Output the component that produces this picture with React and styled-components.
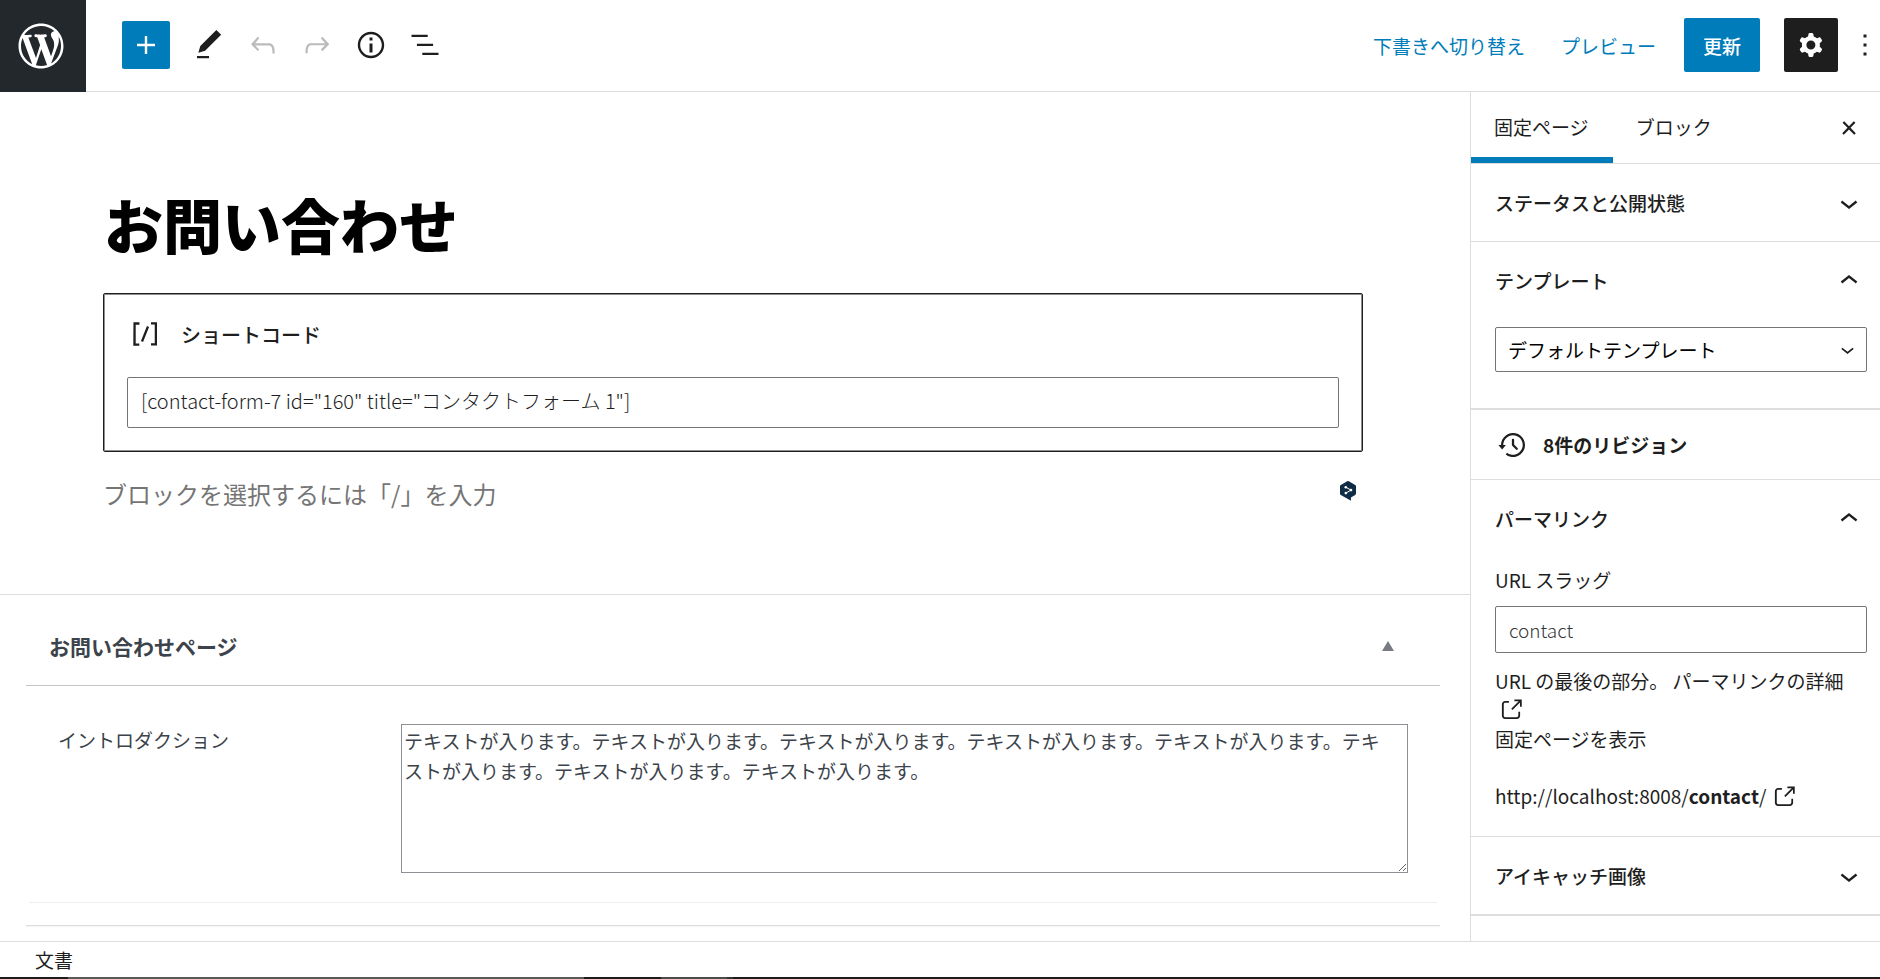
import React, { useState } from "react";
import styled, { createGlobalStyle } from "styled-components";

const color = {
  blue: "#007cba",
  ink: "#1e1e1e",
  line: "#dddddd",
  field: "#757575",
  meta: "#3c434a",
};

const GlobalStyle = createGlobalStyle`
  *, *::before, *::after { box-sizing: border-box; }
  body {
    margin: 0;
    background: #fff;
    color: ${color.ink};
    font-family: "Noto Sans CJK JP", "Noto Sans", sans-serif;
    font-size: 19px;
    line-height: 29px;
  }
  button, input, select, textarea { font: inherit; color: inherit; }
  button { cursor: pointer; }
`;

const paths = {
  plus: "M18 11.2h-5.2V6h-1.6v5.2H6v1.6h5.2V18h1.6v-5.2H18z",
  edit: "M20.1 5.1L16.9 2 6.2 12.7l-1.3 4.4 4.5-1.3L20.1 5.1zM4 20.8h8v-1.5H4v1.5z",
  undo: "M18.3 11.7c-.6-.6-1.4-.9-2.3-.9H6.7l2.9-3.3-1.1-1-4.5 5L8.5 16l1-1-2.7-2.7H16c.5 0 .9.2 1.3.5 1 1 1 3.4 1 4.5v.3h1.5v-.2c0-1.5 0-4.3-1.5-5.7z",
  redo: "M15.6 6.5l-1.1 1 2.9 3.3H8c-.9 0-1.7.3-2.3.9-1.4 1.5-1.4 4.2-1.4 5.6v.2h1.5v-.3c0-1.1 0-3.5 1-4.5.3-.3.7-.5 1.3-.5h9.2L14.5 15l1.1 1.1 4.6-4.6-4.6-5z",
  info: "M12 3.2c-4.8 0-8.8 3.9-8.8 8.8 0 4.8 3.9 8.8 8.8 8.8 4.8 0 8.8-3.9 8.8-8.8 0-4.8-4-8.8-8.8-8.8zm0 16c-4 0-7.2-3.3-7.2-7.2C4.8 8 8 4.8 12 4.8s7.2 3.3 7.2 7.2c0 4-3.2 7.2-7.2 7.2zM11 17h2v-6h-2v6zm0-8h2V7h-2v2z",
  list: "M13.8 5.2H3v1.5h10.8V5.2zm-3.6 12v1.5H21v-1.5H10.2zm7.2-6H6.6v1.5h10.8v-1.5z",
  cog: "M10.289 4.836A1 1 0 0111.275 4h1.306a1 1 0 01.987.836l.244 1.466c.787.26 1.503.679 2.108 1.218l1.393-.522a1 1 0 011.216.437l.653 1.13a1 1 0 01-.23 1.273l-1.148.944a6.025 6.025 0 010 2.435l1.149.946a1 1 0 01.23 1.272l-.653 1.13a1 1 0 01-1.216.437l-1.394-.522c-.605.54-1.32.958-2.108 1.218l-.244 1.466a1 1 0 01-.987.836h-1.306a1 1 0 01-.986-.836l-.244-1.466a5.995 5.995 0 01-2.108-1.218l-1.394.522a1 1 0 01-1.217-.436l-.653-1.131a1 1 0 01.23-1.272l1.149-.946a6.026 6.026 0 010-2.435l-1.148-.944a1 1 0 01-.23-1.272l.653-1.131a1 1 0 011.217-.437l1.393.522a5.994 5.994 0 012.108-1.218l.244-1.466zM14.929 12a3 3 0 11-6 0 3 3 0 016 0z",
  more: "M13 19h-2v-2h2v2zm0-6h-2v-2h2v2zm0-6h-2V5h2v2z",
  down: "M17.5 11.6L12 16l-5.5-4.4.9-1.2L12 14l4.5-3.6 1 1.2z",
  up: "M6.5 12.4L12 8l5.5 4.4-.9 1.2L12 10l-4.5 3.6-1-1.2z",
  close: "M13 11.9l3.3-3.4-1.1-1-3.2 3.3-3.2-3.3-1.1 1 3.3 3.4-3.5 3.6 1 1L12 13l3.5 3.5 1-1z",
  backup: "M5.5 12h1.75l-2.5 3-2.5-3H4a8 8 0 113.134 6.35l.907-1.194A6.5 6.5 0 105.5 12zm9.53 1.97l-2.28-2.28V8.5a.75.75 0 00-1.5 0V12a.747.747 0 00.218.529l1.282-.84-1.28.842 2.5 2.5a.75.75 0 101.06-1.061z",
  external: "M18.2 17c0 .7-.6 1.2-1.2 1.2H7c-.7 0-1.2-.6-1.2-1.2V7c0-.7.6-1.2 1.2-1.2h3.2V4.2H7C5.5 4.2 4.2 5.5 4.2 7v10c0 1.5 1.2 2.8 2.8 2.8h10c1.5 0 2.8-1.2 2.8-2.8v-3.6h-1.5V17zM14.9 3v1.5h3.7l-6.4 6.4 1.1 1.1 6.4-6.4v3.7h1.5V3h-6.3z",
  shortcode: "M16 4.2v1.5h2.5v12.5H16v1.5h4V4.2h-4zM4.2 19.8h4v-1.5H5.8V5.8h2.5V4.2h-4l-.1 15.6zm5.1-3.1l1.4.6 4-10-1.4-.6-4 10z",
  wordpress: "M20 10c0-5.51-4.49-10-10-10C4.48 0 0 4.49 0 10c0 5.52 4.48 10 10 10 5.51 0 10-4.48 10-10zM7.78 15.37L4.37 6.22c.55-.02 1.17-.08 1.17-.08.5-.06.44-1.13-.06-1.11 0 0-1.45.11-2.37.11-.18 0-.37 0-.58-.01C4.12 2.69 6.87 1.11 10 1.11c2.33 0 4.45.87 6.05 2.34-.68-.11-1.65.39-1.65 1.58 0 .74.45 1.36.9 2.1.35.61.55 1.36.55 2.46 0 1.49-1.4 5-1.4 5l-3.03-8.37c.54-.02.82-.17.82-.17.5-.05.44-1.25-.06-1.22 0 0-1.44.12-2.38.12-.87 0-2.33-.12-2.33-.12-.5-.03-.56 1.2-.06 1.22l.92.08 1.26 3.41zM17.41 10c.24-.64.74-1.87.43-4.25.7 1.29 1.05 2.71 1.05 4.25 0 3.29-1.73 6.24-4.4 7.78.97-2.59 1.94-5.2 2.92-7.78zM6.1 18.09C3.12 16.65 1.11 13.53 1.11 10c0-1.3.23-2.48.72-3.59C3.25 10.3 4.67 14.2 6.1 18.09zm4.03-6.63l2.58 6.98c-.86.29-1.76.45-2.71.45-.79 0-1.57-.11-2.29-.33.81-2.38 1.62-4.74 2.42-7.1z",
};

const Svg = styled.svg`
  display: block;
  flex: none;
  fill: currentColor;
`;

function Icon({ name, size = 36, viewBox = "0 0 24 24", className }) {
  return (
    <Svg className={className} width={size} height={size} viewBox={viewBox} aria-hidden="true">
      <path fillRule="evenodd" clipRule="evenodd" d={paths[name]} />
    </Svg>
  );
}

const Page = styled.div`
  display: flex;
  flex-direction: column;
  min-height: 100vh;
`;

const Header = styled.header`
  display: flex;
  align-items: stretch;
  height: 92px;
`;

const HomeLink = styled.a`
  display: flex;
  align-items: center;
  width: 86px;
  padding-left: 14px;
  background: #23282d;
  color: #fff;
`;

const HeaderBar = styled.div`
  flex: 1;
  display: flex;
  align-items: center;
  justify-content: space-between;
  padding: 0 0 1px 36px;
  border-bottom: 1px solid ${color.line};
`;

const Tools = styled.div`
  display: flex;
  align-items: center;
`;

const InserterButton = styled.button`
  display: grid;
  place-items: center;
  width: 48px;
  height: 48px;
  margin-right: 12px;
  padding: 0;
  border: 0;
  border-radius: 2px;
  background: ${color.blue};
  color: #fff;
`;

const IconButton = styled.button`
  display: flex;
  align-items: center;
  justify-content: center;
  width: ${(p) => p.$width || 54}px;
  height: 54px;
  padding: 0;
  border: 0;
  border-radius: 2px;
  background: ${(p) => (p.$pressed ? color.ink : "transparent")};
  color: ${(p) => (p.$pressed ? "#fff" : color.ink)};
  overflow: hidden;

  &:disabled {
    color: #bbb;
    cursor: default;
  }
`;

const Actions = styled(Tools)`
  gap: 12px;
`;

const TextButton = styled.button`
  height: 54px;
  padding: 0 12px;
  border: 0;
  border-radius: 2px;
  background: transparent;
  color: ${color.blue};
`;

const PrimaryButton = styled(TextButton)`
  margin: 0 12px 0 4px;
  padding: 0 19px;
  background: ${color.blue};
  color: #fff;
  font-weight: 500;
`;

const Workspace = styled.div`
  flex: 1;
  display: flex;
`;

const Main = styled.main`
  flex: 1;
  min-width: 0;
  display: flex;
  flex-direction: column;
`;

const Canvas = styled.div`
  display: flex;
  flex-direction: column;
  padding: 92px 107px 82px 103px;
`;

const Title = styled.h1`
  margin: 0 0 29px;
  padding-left: 1px;
  color: #000;
  font-size: 59px;
  line-height: 80px;
  font-weight: 800;
`;

const Shortcode = styled.section`
  padding: 22px 23px 23px;
  border: 1px solid ${color.ink};
  border-radius: 2px;
  box-shadow: inset 0 0 0 1px #8f8f8f;
`;

const BlockLabel = styled.label`
  display: flex;
  align-items: center;
  gap: 18px;
  margin: 0 0 25px;
  font-size: 20px;
  font-weight: 500;
`;

const TextField = styled.input`
  display: block;
  width: 100%;
  height: 47px;
  padding: 0 13px;
  border: 1px solid ${color.field};
  border-radius: 2px;
  background: #fff;
  color: #32373c;
  font-weight: 300;
`;

const ShortcodeField = styled(TextField)`
  height: 51px;
  padding-bottom: 5px;
  color: ${color.ink};
  font-size: 20px;
`;

const Appender = styled.div`
  display: flex;
  align-items: flex-start;
  justify-content: space-between;
  margin-top: 24px;
  padding-right: 7px;
`;

const AppenderText = styled.p`
  margin: 0;
  color: #757575;
  font-size: 24px;
  line-height: 36px;
`;

const Translate = styled.svg`
  display: block;
  margin-top: 5px;
`;

const MetaArea = styled.section`
  flex: 1;
  padding: 17px 30px 15px 26px;
  border-top: 1px solid ${color.line};
  color: ${color.meta};
`;

const MetaBox = styled.div`
  border-bottom: 1px solid #dcdcde;
  box-shadow: 0 1px 1px rgba(0, 0, 0, 0.04);
`;

const MetaHeader = styled.div`
  display: flex;
  align-items: center;
  justify-content: space-between;
  height: 74px;
  padding: 0 36px 5px 23px;
  border-bottom: 1px solid #c3c4c7;
`;

const MetaTitle = styled.h2`
  margin: 0;
  font-size: 21px;
  line-height: 32px;
  font-weight: 600;
`;

const ToggleButton = styled.button`
  display: grid;
  place-items: center;
  width: 32px;
  height: 32px;
  padding: 0;
  border: 0;
  background: transparent;
  color: #787c82;
`;

const MetaRow = styled.div`
  display: grid;
  grid-template-columns: 343px 1fr;
  margin: 0 3px 22px;
  padding: 38px 29px 29px;
  border-bottom: 1px solid #eee;
`;

const MetaLabel = styled.label`
  padding-top: 1px;
`;

const MetaText = styled.textarea`
  display: block;
  width: 100%;
  height: 149px;
  padding: 1px 16px 1px 2px;
  border: 1px solid #8c8f94;
  background: #fff;
  line-height: 30px;
  resize: vertical;
`;

const Sidebar = styled.aside`
  flex: none;
  width: 410px;
  border-left: 1px solid ${color.line};
`;

const Tabs = styled.div`
  display: flex;
  align-items: stretch;
  height: 72px;
  padding-right: 13px;
  border-bottom: 1px solid ${color.line};
`;

const Tab = styled.button`
  padding: 0 24px 2px 23px;
  border: 0;
  background: transparent;
  box-shadow: ${(p) => (p.$active ? `inset 0 -6px ${color.blue}` : "none")};
`;

const CloseButton = styled(IconButton)`
  align-self: center;
  margin-left: auto;
`;

const Panel = styled.section`
  padding: 0 13px ${(p) => p.$bottom || 0}px 24px;
  border-bottom: ${(p) => p.$edge || 1}px solid ${color.line};
`;

const PanelToggle = styled.button`
  display: flex;
  align-items: center;
  justify-content: space-between;
  width: 100%;
  height: 77px;
  padding: 0;
  border: 0;
  background: transparent;
  font-weight: 500;
  text-align: left;
`;

const Revisions = styled.button`
  display: flex;
  align-items: center;
  gap: 12px;
  height: 69px;
  padding: 0;
  border: 0;
  background: transparent;
  font-weight: 600;
`;

const SelectWrap = styled.div`
  display: grid;
  align-items: center;
  margin-top: 8px;

  & > * { grid-area: 1 / 1; }
`;

const Select = styled.select`
  appearance: none;
  width: 100%;
  height: 45px;
  padding: 0 36px 0 12px;
  border: 1px solid ${color.field};
  border-radius: 2px;
  background: #fff;
  color: #000;
`;

const SelectArrow = styled(Icon)`
  justify-self: end;
  margin-right: 6px;
  pointer-events: none;
`;

const FieldLabel = styled.label`
  display: block;
  margin: 8px 0 12px;
`;

const Help = styled.p`
  margin: 13px 0 0;
`;

const PlainLink = styled.a`
  color: inherit;
  text-decoration: none;
`;

const InlineIcon = styled(Icon)`
  display: inline-block;
  margin: 2px 0 0 4px;
  vertical-align: top;
`;

const NextLineIcon = styled(Icon)`
  margin: 1px 0 0 2px;
`;

const Permalink = styled.p`
  margin: 28px 0 0;
`;

const Footer = styled.footer`
  height: 36px;
  padding: 3px 35px 0;
  border-top: 1px solid ${color.line};
`;

const BottomEdge = styled.div`
  height: 2px;
  background: linear-gradient(
    90deg,
    #1f1b1c 68px, #5a5858 68px 584px,
    #1f1b1c 584px 661px, #4c4a4a 661px 727px,
    #333 727px 733px, #1f1b1c 733px
  );
`;

const introText = "テキストが入ります。".repeat(8);

function PanelHeading({ children, open }) {
  return (
    <PanelToggle type="button" aria-expanded={open}>
      {children}
      <Icon name={open ? "up" : "down"} />
    </PanelToggle>
  );
}

export default function App() {
  const [shortcode, setShortcode] = useState('[contact-form-7 id="160" title="コンタクトフォーム 1"]');
  const [slug, setSlug] = useState("contact");
  const [intro, setIntro] = useState(introText);

  return (
    <>
      <GlobalStyle />
      <Page>
        <Header>
          <HomeLink href="#" aria-label="WordPress">
            <Icon name="wordpress" size={54} viewBox="-2 -2 24 24" />
          </HomeLink>
          <HeaderBar>
            <Tools>
              <InserterButton type="button" aria-label="ブロックを追加"><Icon name="plus" /></InserterButton>
              <IconButton type="button" aria-label="ツール"><Icon name="edit" /></IconButton>
              <IconButton type="button" aria-label="元に戻す" disabled><Icon name="undo" /></IconButton>
              <IconButton type="button" aria-label="やり直す" disabled><Icon name="redo" /></IconButton>
              <IconButton type="button" aria-label="詳細"><Icon name="info" /></IconButton>
              <IconButton type="button" aria-label="リスト表示"><Icon name="list" /></IconButton>
            </Tools>
            <Actions>
              <TextButton type="button">下書きへ切り替え</TextButton>
              <TextButton type="button">プレビュー</TextButton>
              <PrimaryButton type="button">更新</PrimaryButton>
              <IconButton type="button" aria-label="設定" $pressed><Icon name="cog" /></IconButton>
              <IconButton type="button" aria-label="オプション" $width={30}><Icon name="more" /></IconButton>
            </Actions>
          </HeaderBar>
        </Header>

        <Workspace>
          <Main>
            <Canvas>
              <Title>お問い合わせ</Title>
              <Shortcode>
                <BlockLabel htmlFor="shortcode">
                  <Icon name="shortcode" />
                  ショートコード
                </BlockLabel>
                <ShortcodeField
                  id="shortcode"
                  value={shortcode}
                  onChange={(e) => setShortcode(e.target.value)}
                />
              </Shortcode>
              <Appender>
                <AppenderText>ブロックを選択するには「/」を入力</AppenderText>
                <Translate width="16" height="20" viewBox="0 0 16 20" aria-hidden="true">
                  <path fill="#0f2b46" d="M7.2.3a1.6 1.6 0 0 1 1.6 0l6.400 3.600c.5.300.8.800.8 1.400v7.300c0 .6-.3 1.100-.8 1.400l-4.300 2.500.1 3.200-3.100-1.800L.8 14a1.600 1.600 0 0 1-.8-1.400V5.300c0-.6.3-1.100.8-1.400z" />
                  <path fill="none" stroke="#fff" strokeWidth="1" d="M5.800 6.200L11 9.100l-5.200 3" />
                  <circle cx="5.800" cy="6.200" r="1.300" fill="#fff" />
                  <circle cx="11" cy="9.100" r="1.300" fill="#fff" />
                  <circle cx="5.800" cy="12.100" r="1.300" fill="#fff" />
                </Translate>
              </Appender>
            </Canvas>

            <MetaArea>
              <MetaBox>
                <MetaHeader>
                  <MetaTitle>お問い合わせページ</MetaTitle>
                  <ToggleButton type="button" aria-label="パネルを切り替え">
                    <Svg width="12" height="10" viewBox="0 0 12 10" aria-hidden="true">
                      <path d="M6 0l6 10H0z" />
                    </Svg>
                  </ToggleButton>
                </MetaHeader>
                <MetaRow>
                  <MetaLabel htmlFor="intro">イントロダクション</MetaLabel>
                  <MetaText id="intro" value={intro} onChange={(e) => setIntro(e.target.value)} />
                </MetaRow>
              </MetaBox>
            </MetaArea>
          </Main>

          <Sidebar>
            <Tabs>
              <Tab type="button" $active>固定ページ</Tab>
              <Tab type="button">ブロック</Tab>
              <CloseButton type="button" aria-label="設定を閉じる" $width={36}><Icon name="close" /></CloseButton>
            </Tabs>
            <Panel>
              <PanelHeading open={false}>ステータスと公開状態</PanelHeading>
            </Panel>
            <Panel $bottom={36} $edge={2}>
              <PanelHeading open>テンプレート</PanelHeading>
              <SelectWrap>
                <Select aria-label="テンプレート" defaultValue="default">
                  <option value="default">デフォルトテンプレート</option>
                </Select>
                <SelectArrow name="down" size={27} />
              </SelectWrap>
            </Panel>
            <Panel>
              <Revisions type="button">
                <Icon name="backup" />
                8件のリビジョン
              </Revisions>
            </Panel>
            <Panel $bottom={25}>
              <PanelHeading open>パーマリンク</PanelHeading>
              <FieldLabel htmlFor="slug">URL スラッグ</FieldLabel>
              <TextField id="slug" value={slug} onChange={(e) => setSlug(e.target.value)} />
              <Help>
                URL の最後の部分。{" "}
                <PlainLink href="#">
                  パーマリンクの詳細
                  <NextLineIcon name="external" size={28} />
                </PlainLink>
                固定ページを表示
              </Help>
              <Permalink>
                <PlainLink href="#">
                  http://localhost:8008/<strong>contact</strong>/
                  <InlineIcon name="external" size={28} />
                </PlainLink>
              </Permalink>
            </Panel>
            <Panel $edge={2}>
              <PanelHeading open={false}>アイキャッチ画像</PanelHeading>
            </Panel>
          </Sidebar>
        </Workspace>

        <Footer>文書</Footer>
        <BottomEdge />
      </Page>
    </>
  );
}
